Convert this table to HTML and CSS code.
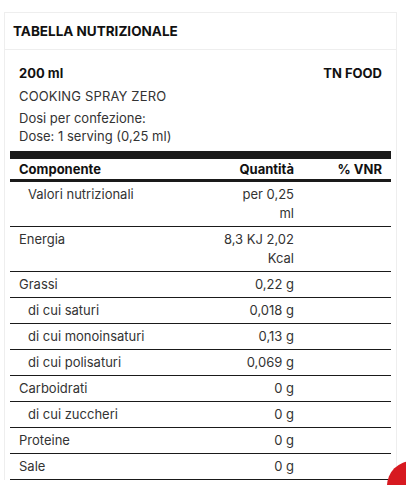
FILE: index.html
```html
<!DOCTYPE html>
<html>
<head>
<meta name="viewport" content="width=device-width, initial-scale=1.0">
<link rel="stylesheet" href="styles.css">
</head>
<body>
<div class="card">
<div class="card-head">TABELLA NUTRIZIONALE</div>
<div class="card-body">
<div class="info">
<div class="top-row"><b>200 ml</b><b>TN FOOD</b></div>
<p class="product">COOKING SPRAY ZERO</p>
<p class="dose">Dosi per confezione:<br>Dose: 1 serving (0,25 ml)</p>
</div>
<table class="nutri">
<thead>
<tr><th>Componente</th><th class="qty">Quantità</th><th class="vnr">% VNR</th></tr>
</thead>
<tbody>
<tr><td class="sub top">Valori nutrizionali</td><td class="qty">per 0,25<br>ml</td><td></td></tr>
<tr><td class="top">Energia</td><td class="qty">8,3 KJ 2,02<br>Kcal</td><td></td></tr>
<tr><td>Grassi</td><td class="qty">0,22 g</td><td></td></tr>
<tr><td class="sub">di cui saturi</td><td class="qty">0,018 g</td><td></td></tr>
<tr><td class="sub">di cui monoinsaturi</td><td class="qty">0,13 g</td><td></td></tr>
<tr><td class="sub">di cui polisaturi</td><td class="qty">0,069 g</td><td></td></tr>
<tr><td>Carboidrati</td><td class="qty">0 g</td><td></td></tr>
<tr><td class="sub">di cui zuccheri</td><td class="qty">0 g</td><td></td></tr>
<tr><td>Proteine</td><td class="qty">0 g</td><td></td></tr>
<tr><td>Sale</td><td class="qty">0 g</td><td></td></tr>
</tbody>
</table>
</div>
</div>
<div class="fab-clip"><div class="fab"></div></div>
</body>
</html>
```
FILE: styles.css
```css
*{
margin:0;
padding:0;
box-sizing:border-box;
}
html,body{
overflow:hidden;
}
body{
background:#fff;
font-family:"Inter","Open Sans",sans-serif;
color:#333;
font-size:13px;
height:485px;
position:relative;
}
.card{
margin:12px 9px 0 4px;
border:1px solid #eee;
border-bottom:none;
}
.card-head{
height:37px;
padding:0 8px;
display:flex;
align-items:center;
font-weight:700;
font-size:13.5px;
color:#111;
border-bottom:1px solid #eee;
}
.card-body{
padding:0 5px;
}
.info{
padding:15px 9px 6px;
}
.top-row{
display:flex;
justify-content:space-between;
color:#111;
line-height:17px;
}
.product{
margin-top:6px;
line-height:17px;
letter-spacing:0.15px;
}
.dose{
margin-top:4px;
line-height:18px;
}
.nutri{
width:100%;
font-size:13px;
border-collapse:collapse;
border-top:8px solid #1a1a1a;
}
.nutri th{
font-weight:700;
color:#111;
text-align:left;
height:25px;
padding:0 9px;
border-bottom:3px solid #1a1a1a;
}
.nutri td{
padding:3px 9px;
height:25px;
line-height:19px;
border-bottom:1px solid #1a1a1a;
vertical-align:middle;
}
.nutri td.top{
vertical-align:top;
}
.nutri .qty{
width:88px;
padding-left:0;
text-align:right;
white-space:nowrap;
}
.nutri .vnr{
width:88px;
text-align:right;
}
.nutri td.sub{
padding-left:18px;
}
.fab-clip{
position:absolute;
right:0;
bottom:0;
width:19px;
height:24px;
overflow:hidden;
}
.fab{
width:50px;
height:50px;
border-radius:50%;
background:#d71920;
}
```
